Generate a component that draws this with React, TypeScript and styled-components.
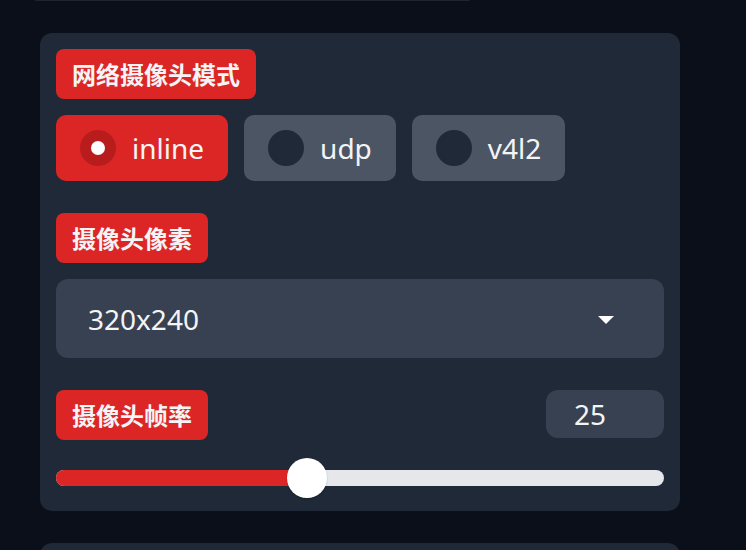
import React from "react";
import styled, { createGlobalStyle } from "styled-components";

const Global = createGlobalStyle`
  html, body { margin: 0; padding: 0; background: #0b0f19; }
  body { font-family: "Noto Sans", "Noto Sans CJK SC", sans-serif; overflow: hidden; }
`;

const Page = styled.div`
  display: flex;
  flex-direction: column;
  gap: 32px;
  padding: 0 66px 0 40px;
  height: 550px;
  overflow: hidden;
`;

const Stub = styled.div`
  height: 1px;
  width: 435px;
  margin-left: -5px;
  flex-shrink: 0;
  background: #1e2431;
  border-radius: 0 0 4px 4px;
`;

const Card = styled.section`
  background: #1f2937;
  border-radius: 12px;
  padding: 16px;
  display: flex;
  flex-direction: column;
  flex-shrink: 0;
`;

const NextCard = styled(Card)`
  height: 60px;
`;

const Label = styled.span<{ $mt?: number }>`
  align-self: flex-start;
  background: #dc2626;
  color: #f3f4f6;
  font-family: "Noto Sans CJK SC", sans-serif;
  font-weight: 700;
  font-size: 24px;
  line-height: 50px;
  height: 50px;
  padding: 0 16px;
  border-radius: 8px;
  margin-top: ${(p) => p.$mt ?? 0}px;
`;

const RadioRow = styled.div`
  display: flex;
  gap: 16px;
  margin-top: 16px;
`;

const RadioOption = styled.label<{ $on?: boolean }>`
  display: flex;
  align-items: center;
  gap: 16px;
  height: 66px;
  padding: 0 24px;
  box-sizing: border-box;
  border-radius: 10px;
  background: ${(p) => (p.$on ? "#dc2626" : "#4b5563")};
  color: #f3f4f6;
  font-size: 28px;
`;

const Dot = styled.span<{ $on?: boolean }>`
  width: 36px;
  height: 36px;
  border-radius: 50%;
  background: ${(p) => (p.$on ? "#b91c1c" : "#1f2937")};
  display: flex;
  align-items: center;
  justify-content: center;
  &::after {
    content: "";
    display: ${(p) => (p.$on ? "block" : "none")};
    width: 14px;
    height: 14px;
    border-radius: 50%;
    background: #ffffff;
  }
`;

const Select = styled.div`
  margin-top: 16px;
  height: 79px;
  background: #374151;
  border-radius: 12px;
  display: flex;
  align-items: center;
  justify-content: space-between;
  padding: 0 50px 0 32px;
  color: #f3f4f6;
  font-size: 28px;
`;

const Caret = styled.span`
  width: 0;
  height: 0;
  border-left: 8px solid transparent;
  border-right: 8px solid transparent;
  border-top: 8px solid #ffffff;
  margin-top: 2px;
`;

const HeaderRow = styled.div`
  display: flex;
  align-items: flex-start;
  justify-content: space-between;
  margin-top: 32px;
`;

const NumberBox = styled.div`
  width: 118px;
  height: 48px;
  box-sizing: border-box;
  background: #374151;
  border-radius: 12px;
  color: #f3f4f6;
  font-size: 28px;
  display: flex;
  align-items: center;
  padding-left: 28px;
`;

const SliderWrap = styled.div`
  position: relative;
  height: 40px;
  margin-top: 18px;
  margin-bottom: -3px;
  display: flex;
  align-items: center;
`;

const Track = styled.div`
  position: relative;
  width: 100%;
  height: 16px;
  border-radius: 8px;
  background: #e5e7eb;
  overflow: hidden;
`;

const Fill = styled.div`
  height: 100%;
  background: #dc2626;
`;

const Thumb = styled.div`
  position: absolute;
  top: 0;
  width: 40px;
  height: 40px;
  border-radius: 50%;
  background: #ffffff;
  transform: translateX(-50%);
  box-shadow: 0 1px 2px rgba(0, 0, 0, 0.2);
`;

const options = ["inline", "udp", "v4l2"];

export default function App() {
  const value = 25;
  const pct = 41.3;
  return (
    <>
      <Global />
      <Page>
        <Stub />
        <Card>
          <Label>网络摄像头模式</Label>
          <RadioRow>
            {options.map((o) => (
              <RadioOption key={o} $on={o === "inline"}>
                <Dot $on={o === "inline"} />
                {o}
              </RadioOption>
            ))}
          </RadioRow>
          <Label $mt={32}>摄像头像素</Label>
          <Select>
            <span>320x240</span>
            <Caret />
          </Select>
          <HeaderRow>
            <Label>摄像头帧率</Label>
            <NumberBox>{value}</NumberBox>
          </HeaderRow>
          <SliderWrap>
            <Track>
              <Fill style={{ width: `${pct}%` }} />
            </Track>
            <Thumb style={{ left: `${pct}%` }} />
          </SliderWrap>
        </Card>
        <NextCard />
      </Page>
    </>
  );
}
